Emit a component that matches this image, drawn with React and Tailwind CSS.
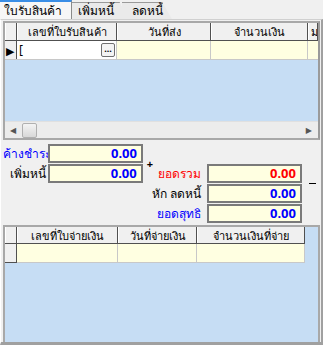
import React from 'react';

const font = { fontFamily: 'Tahoma, "Noto Sans", "DejaVu Sans", sans-serif' };

const Tabs = () => (
  <div className="flex h-[19px] items-end text-[12px] text-black">
    <div className="relative z-10 flex h-[19px] w-[72px] items-center border-t-2 border-t-[#3a8ee6] border-r border-r-[#8a8a8a] bg-[#f7f7f7] pl-[4px] leading-none">
      ใบรับสินค้า
    </div>
    <div className="flex h-[17px] w-[56px] items-center border-t border-r border-[#9a9a9a] bg-[#eaeaea] pl-[6px] leading-none [clip-path:polygon(0_0,85%_0,100%_100%,0_100%)]">
      เพิ่มหนี้
    </div>
    <div className="-ml-[6px] flex h-[17px] w-[50px] items-center border-t border-[#9a9a9a] bg-[#eaeaea] pl-[10px] leading-none [clip-path:polygon(0_0,80%_0,100%_100%,0_100%)]">
      ลดหนี้
    </div>
  </div>
);

const HeadCell = ({ w, children, grow }) => (
  <div
    className={`flex h-full shrink-0 items-center justify-center border-r border-r-[#505050] border-l border-l-white bg-[#f0f0f0] text-[11px] leading-none text-black whitespace-nowrap overflow-hidden ${grow ? 'flex-1 justify-start pl-[2px]' : ''}`}
    style={w ? { width: w } : undefined}
  >
    {children}
  </div>
);

const Field = ({ value, red }) => (
  <div className={`flex h-[19px] w-[95px] shrink-0 items-center justify-end border-2 border-[#7a7a7a] bg-[#ffffe1] pr-[4px] text-[13px] font-bold leading-none ${red ? 'text-[#ff0000]' : 'text-[#0000ff]'}`}>
    {value}
  </div>
);

const Row = ({ children }) => <div className="flex h-[19px] items-center">{children}</div>;

export default function App() {
  return (
    <div className="h-[345px] w-[323px] overflow-hidden bg-[#f0f0f0]" style={font}>
      <Tabs />
      <div className="flex h-[326px] flex-col border-l border-l-white border-r-2 border-r-[#a0a0a0] border-b-[3px] border-b-[#a0a0a0] border-t border-t-[#d0d0d0] pl-[2px] pr-[1px]">
        {/* upper grid */}
        <div className="mt-[1px] flex h-[119px] flex-col border-2 border-[#a8a8a8] border-r-[#9a9a9a]">
          <div className="flex h-[118px] flex-col bg-[#c6ddf4]">
            <div className="flex h-[18px] border-b border-[#505050]">
              <HeadCell w={12} />
              <HeadCell w={100}>เลขที่ใบรับสินค้า</HeadCell>
              <HeadCell w={94}>วันที่ส่ง</HeadCell>
              <HeadCell w={97}>จำนวนเงิน</HeadCell>
              <HeadCell grow>ม</HeadCell>
            </div>
            <div className="flex h-[19px] border-b border-[#c8c8c8]">
              <div className="flex w-[12px] shrink-0 items-center border-r border-[#505050] bg-[#f0f0f0] pl-[1px] text-[11px] leading-none">▶</div>
              <div className="flex w-[100px] shrink-0 items-center justify-between border-r border-[#c8c8c8] bg-white pl-[2px] pr-[1px]">
                <span className="text-[12px] leading-none">[</span>
                <span className="flex h-[14px] w-[14px] items-center justify-center rounded-[2px] border border-[#707070] bg-[#f4f4f4] text-[9px] font-bold leading-none">···</span>
              </div>
              <div className="w-[94px] shrink-0 border-r border-[#c8c8c8] bg-[#ffffe1]" />
              <div className="w-[97px] shrink-0 border-r border-[#c8c8c8] bg-[#ffffe1]" />
              <div className="flex-1 bg-[#ffffe1]" />
            </div>
            <div className="flex-1" />
            <div className="flex h-[17px] items-center border-t border-[#e0e0e0] bg-[#ececec]">
              <span className="ml-[5px] text-[8px] leading-none text-[#555]">◀</span>
              <div className="ml-[6px] h-[15px] w-[15px] rounded-[2px] border border-[#b0b0b0] bg-gradient-to-b from-[#f4f4f4] to-[#d8d8d8]" />
              <div className="flex-1" />
              <span className="mr-[6px] text-[8px] leading-none text-[#555]">▶</span>
            </div>
          </div>
        </div>

        {/* totals */}
        <div className="mt-[4px] flex h-[80px] text-[12px] leading-none">
          <div className="flex w-[150px] flex-col gap-[1px]">
            <Row>
              <span className="w-[45px] whitespace-nowrap text-[#0000ff]">ค้างชำระ</span>
              <Field value="0.00" />
            </Row>
            <Row>
              <span className="w-[45px] whitespace-nowrap pr-[2px] text-right text-black">เพิ่มหนี้</span>
              <Field value="0.00" />
              <span className="-mt-[6px] ml-[4px] self-start text-[11px] font-bold">+</span>
            </Row>
          </div>
          <div className="ml-[4px] flex flex-col gap-[1px] pt-[20px]">
            <Row>
              <span className="w-[50px] whitespace-nowrap pr-[6px] text-right text-[#ff0000]">ยอดรวม</span>
              <Field value="0.00" red />
              <span className="ml-[7px] mt-[19px] h-[1px] w-[7px] bg-black" />
            </Row>
            <Row>
              <span className="-ml-[12px] w-[62px] whitespace-nowrap pr-[6px] text-right text-black">หัก ลดหนี้</span>
              <Field value="0.00" />
            </Row>
            <Row>
              <span className="w-[50px] whitespace-nowrap pr-[6px] text-right text-[#0000ff]">ยอดสุทธิ</span>
              <Field value="0.00" />
            </Row>
          </div>
        </div>

        {/* lower grid */}
        <div className="mt-[1px] flex flex-1 flex-col border-l-2 border-t-2 border-r-2 border-[#a8a8a8] bg-[#c6ddf4]">
          <div className="flex h-[17px]">
            <div className="flex border-b border-[#505050]">
              <HeadCell w={12} />
              <HeadCell w={101}>เลขที่ใบจ่ายเงิน</HeadCell>
              <HeadCell w={79}>วันที่จ่ายเงิน</HeadCell>
              <HeadCell w={108}>จำนวนเงินที่จ่าย</HeadCell>
            </div>
          </div>
          <div className="flex h-[19px]">
            <div className="w-[12px] shrink-0 border-r border-b border-[#505050] bg-[#f0f0f0]" />
            <div className="w-[101px] shrink-0 border-r border-b border-[#c8c8c8] bg-[#ffffe1]" />
            <div className="w-[79px] shrink-0 border-r border-b border-[#c8c8c8] bg-[#ffffe1]" />
            <div className="w-[108px] shrink-0 border-r border-b border-[#c8c8c8] bg-[#ffffe1]" />
          </div>
        </div>
      </div>
    </div>
  );
}
